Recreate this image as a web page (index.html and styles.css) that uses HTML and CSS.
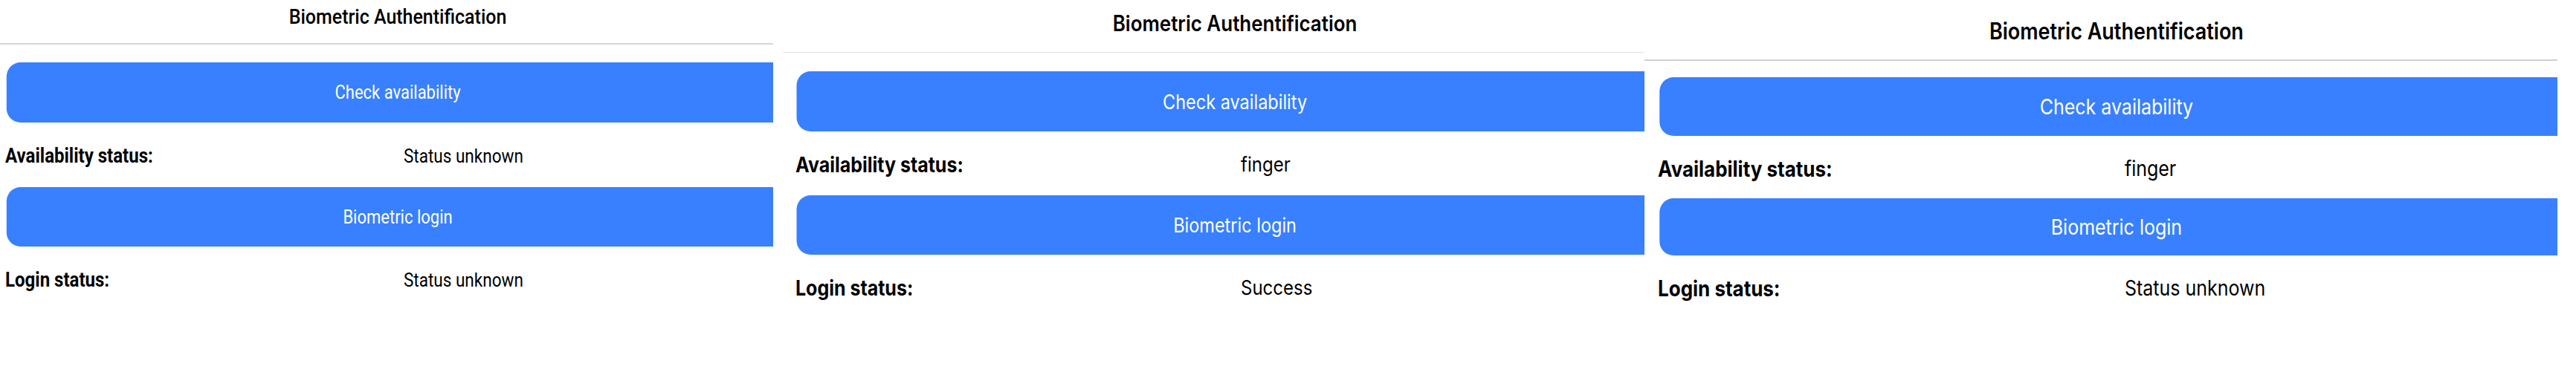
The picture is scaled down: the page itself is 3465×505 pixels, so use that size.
FILE: index.html
```html
<!DOCTYPE html>
<html lang="en">
<head>
<meta charset="utf-8">
<title>Biometric Authentification</title>
<link rel="stylesheet" href="styles.css">
</head>
<body>
<div class="screens">
  <section class="shot shot-a">
    <div class="device">
      <header class="toolbar"><h1 class="title">Biometric Authentification</h1></header>
      <main class="content">
        <button class="btn btn-first">Check availability</button>
        <div class="row"><span class="label">Availability status:</span><span class="value">Status unknown</span></div>
        <button class="btn btn-second">Biometric login</button>
        <div class="row"><span class="label">Login status:</span><span class="value">Status unknown</span></div>
      </main>
    </div>
  </section>
  <section class="shot shot-b">
    <div class="device">
      <header class="toolbar"><h1 class="title">Biometric Authentification</h1></header>
      <main class="content">
        <button class="btn btn-first">Check availability</button>
        <div class="row"><span class="label">Availability status:</span><span class="value">finger</span></div>
        <button class="btn btn-second">Biometric login</button>
        <div class="row"><span class="label">Login status:</span><span class="value">Success</span></div>
      </main>
    </div>
  </section>
  <section class="shot shot-c">
    <div class="device">
      <header class="toolbar"><h1 class="title">Biometric Authentification</h1></header>
      <main class="content">
        <button class="btn btn-first">Check availability</button>
        <div class="row"><span class="label">Availability status:</span><span class="value">finger</span></div>
        <button class="btn btn-second">Biometric login</button>
        <div class="row"><span class="label">Login status:</span><span class="value">Status unknown</span></div>
      </main>
    </div>
  </section>
</div>
</body>
</html>
```
FILE: styles.css
```css
html, body {
  margin: 0;
  padding: 0;
  background: #ffffff;
}

.screens {
  display: flex;
  align-items: flex-start;
  width: 3465px;
  height: 505px;
  overflow: hidden;
  color: #000000;
}

.shot {
  flex: none;
  overflow: hidden;
  height: 505px;
}

/* each screenshot is slightly squeezed horizontally */
.device {
  display: flex;
  flex-direction: column;
  transform: scaleX(0.88);
  transform-origin: 0 0;
}

.toolbar {
  box-sizing: border-box;
  border-bottom: 2px solid #d6d6d6;
}

.title {
  margin: 0;
  text-align: center;
  font-weight: 500;
}

.content {
  display: flex;
  flex-direction: column;
}

.btn {
  display: block;
  box-sizing: border-box;
  border: none;
  padding: 0;
  background: #3880ff;
  color: #ffffff;
  border-radius: 21.5px / 19px;
  font: inherit;
  text-align: center;
}

.row {
  box-sizing: border-box;
  display: grid;
  grid-template-columns: 1fr 1fr;
  align-items: center;
  padding-top: 3px;
}

.label {
  font-weight: 700;
}

.value {
  font-weight: 400;
}

/* Panel A: Android / Roboto */
.shot-a {
  width: 1040px;
  font-family: Roboto, "Liberation Sans", sans-serif;
}
.shot-a .device { width: 1216px; }
.shot-a .toolbar { height: 60px; }
.shot-a .title { font-size: 28.4px; line-height: 45px; }
.shot-a .btn { margin: 0 10px; font-size: 25px; }
.shot-a .btn-first { margin-top: 24px; height: 81px; }
.shot-a .btn-second { height: 80px; }
.shot-a .row { height: 87px; }
.shot-a .label { padding-left: 8px; font-size: 27.3px; }
.shot-a .value { padding-left: 9px; font-size: 25.6px; }

/* Panel B: iOS */
.shot-b {
  width: 1159px;
  margin-left: 13px;
  font-family: Inter, "Liberation Sans", sans-serif;
}
.shot-b .device { width: 1382px; }
.shot-b .toolbar { height: 71px; border-bottom: 1px solid #e2e2e2; }
.shot-b .title { font-size: 29.5px; line-height: 62px; font-weight: 600; }
.shot-b .btn { margin: 0 20.5px; font-size: 26.7px; }
.shot-b .btn-first { margin-top: 25px; height: 81px; }
.shot-b .btn-second { height: 80px; }
.shot-b .row { height: 86px; }
.shot-b .label { padding-left: 19.3px; font-size: 28.4px; }
.shot-b .value { padding-left: 9px; font-size: 27.3px; }

/* Panel C: iOS */
.shot-c {
  width: 1228px;
  font-family: Inter, "Liberation Sans", sans-serif;
}
.shot-c .device { width: 1443px; }
.shot-c .toolbar { height: 82px; padding-top: 20px; border-bottom: 2px solid #cfcfcf; }
.shot-c .title { font-size: 30.7px; line-height: 44px; font-weight: 600; }
.shot-c .btn { margin: 0 22.7px; font-size: 28.4px; }
.shot-c .btn-first { margin-top: 22px; height: 79px; }
.shot-c .btn-second { height: 77px; }
.shot-c .row { height: 84px; }
.shot-c .label { padding-left: 20.5px; font-size: 29.5px; }
.shot-c .value { padding-left: 12.5px; font-size: 28.4px; }
```
